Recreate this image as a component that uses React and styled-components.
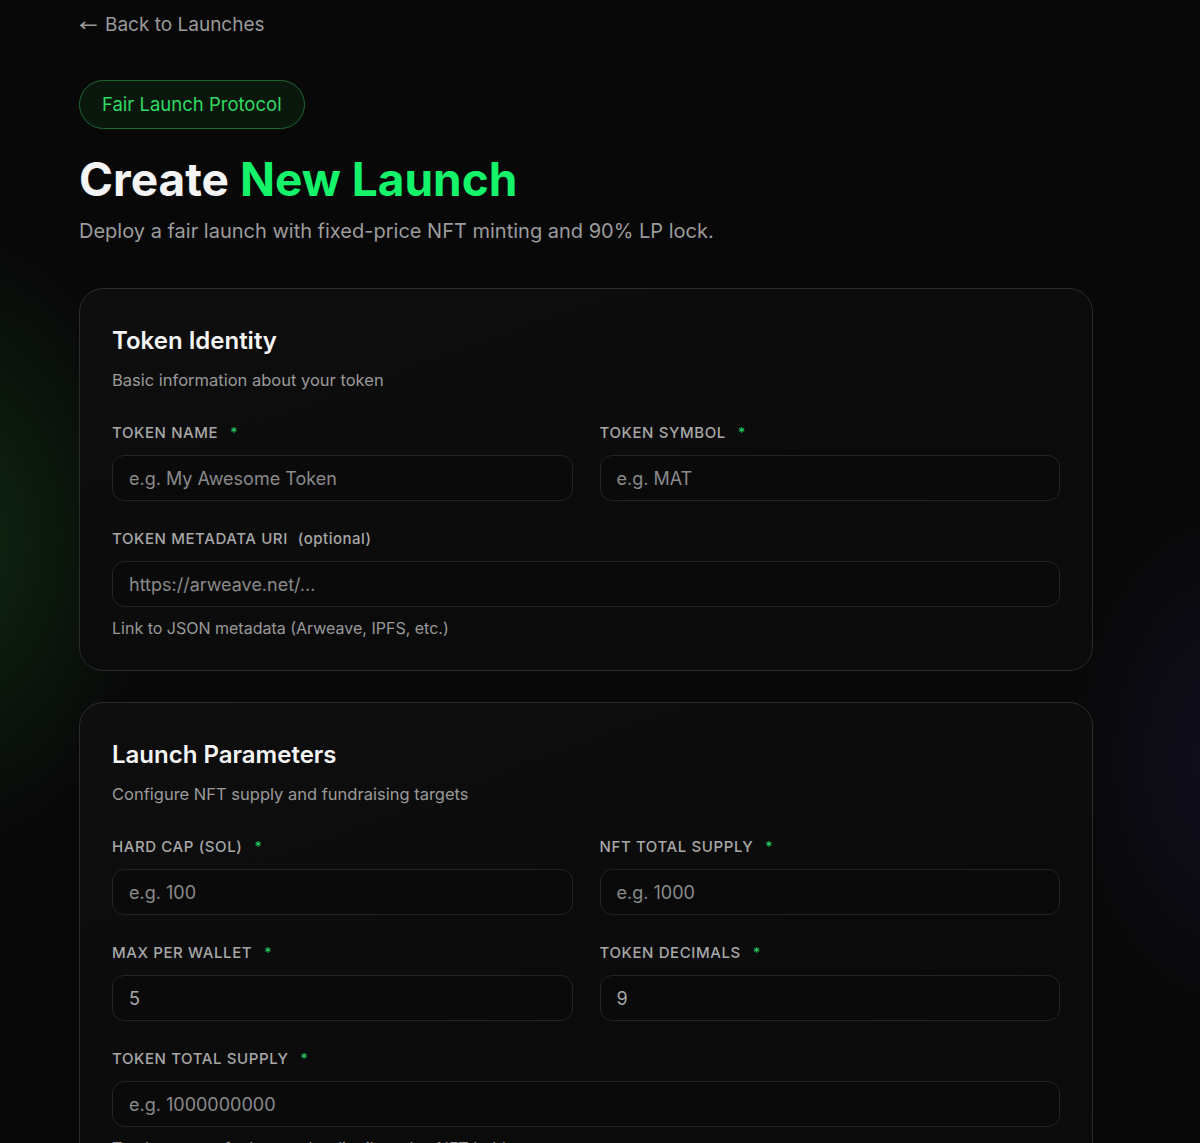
import React from "react";
import styled, { createGlobalStyle } from "styled-components";

const GlobalStyle = createGlobalStyle`
  * { box-sizing: border-box; }
  html, body {
    margin: 0;
    padding: 0;
    background: #080808;
  }
  body {
    font-family: "Inter", "Liberation Sans", sans-serif;
    color: #f2f2f2;
    min-height: 1143px;
    background:
      radial-gradient(ellipse 280px 440px at -40px 540px, rgba(30, 110, 40, 0.3), transparent 70%),
      radial-gradient(ellipse 240px 380px at 1230px 760px, rgba(60, 40, 130, 0.18), transparent 70%),
      #080808;
  }
`;

const fields1 = [
  { label: "Token Name", required: true, placeholder: "e.g. My Awesome Token" },
  { label: "Token Symbol", required: true, placeholder: "e.g. MAT" },
  {
    label: "Token Metadata URI",
    optional: true,
    placeholder: "https://arweave.net/...",
    help: "Link to JSON metadata (Arweave, IPFS, etc.)",
    wide: true,
  },
];

const fields2 = [
  { label: "Hard Cap (SOL)", required: true, placeholder: "e.g. 100" },
  { label: "NFT Total Supply", required: true, placeholder: "e.g. 1000" },
  { label: "Max Per Wallet", required: true, value: "5" },
  { label: "Token Decimals", required: true, value: "9" },
  {
    label: "Token Total Supply",
    required: true,
    placeholder: "e.g. 1000000000",
    help: "Total amount of tokens to be distributed to NFT holders",
    wide: true,
  },
];

function Field({ label, required, optional, placeholder, value, help, wide }) {
  return (
    <FieldBox $wide={wide}>
      <Label>
        {label}
        {required && <Star>*</Star>}
        {optional && <Optional>(optional)</Optional>}
      </Label>
      <Input placeholder={placeholder} defaultValue={value} />
      {help && <Help>{help}</Help>}
    </FieldBox>
  );
}

function Section({ title, desc, fields }) {
  return (
    <Card>
      <CardTitle>{title}</CardTitle>
      <CardDesc>{desc}</CardDesc>
      <Grid>
        {fields.map((f) => (
          <Field key={f.label} {...f} />
        ))}
      </Grid>
    </Card>
  );
}

export default function App() {
  return (
    <>
      <GlobalStyle />
      <Page>
        <BackLink href="#">
          <Arrow>←</Arrow>Back to Launches
        </BackLink>
        <Badge>Fair Launch Protocol</Badge>
        <Title>
          Create <Accent>New Launch</Accent>
        </Title>
        <Subtitle>
          Deploy a fair launch with fixed-price NFT minting and 90% LP lock.
        </Subtitle>
        <Sections>
          <Section
            title="Token Identity"
            desc="Basic information about your token"
            fields={fields1}
          />
          <Section
            title="Launch Parameters"
            desc="Configure NFT supply and fundraising targets"
            fields={fields2}
          />
        </Sections>
      </Page>
    </>
  );
}

const Page = styled.div`
  padding: 13px 79px 0;
  max-width: 1172px;
  height: 1143px;
  overflow: hidden;
`;

const BackLink = styled.a`
  display: inline-flex;
  align-items: center;
  gap: 6px;
  font-size: 19px;
  line-height: 24px;
  color: #9a9a9a;
  text-decoration: none;
`;

const Arrow = styled.span`
  display: inline-block;
  font-family: "DejaVu Sans", sans-serif;
  font-size: 18px;
  transform: scaleX(1.25);
  transform-origin: left center;
  width: 20px;
`;

const Badge = styled.div`
  display: block;
  width: fit-content;
  margin-top: 43px;
  height: 49px;
  padding: 0 22px;
  border-radius: 999px;
  border: 1px solid #1f6a33;
  background: #0a170d;
  color: #2fdc62;
  font-size: 18.5px;
  line-height: 47px;
`;

const Title = styled.h1`
  margin: 22px 0 0;
  font-size: 46px;
  line-height: 56px;
  font-weight: 700;
  color: #f4f4f4;
`;

const Accent = styled.span`
  color: #14f36a;
`;

const Subtitle = styled.p`
  margin: 10px 0 0;
  font-size: 20px;
  line-height: 28px;
  color: #9c9c9c;
`;

const Sections = styled.div`
  margin-top: 43px;
  display: flex;
  flex-direction: column;
  gap: 31px;
  max-width: 1014px;
`;

const Card = styled.section`
  border: 1px solid #2b2b2b;
  border-radius: 24px;
  background: linear-gradient(160deg, #0e0e0e 0%, #0b0b0b 60%, #0c0c0e 100%);
  padding: 36px 32px 32px;
`;

const CardTitle = styled.h2`
  margin: 0;
  font-size: 24px;
  line-height: 32px;
  font-weight: 600;
  color: #f5f5f5;
`;

const CardDesc = styled.p`
  margin: 12px 0 0;
  font-size: 16.5px;
  line-height: 22px;
  color: #9a9a9a;
`;

const Grid = styled.div`
  margin-top: 32px;
  display: grid;
  grid-template-columns: 1fr 1fr;
  column-gap: 27px;
  row-gap: 28px;
`;

const FieldBox = styled.div`
  display: flex;
  flex-direction: column;
  grid-column: ${(p) => (p.$wide ? "1 / -1" : "auto")};
`;

const Label = styled.label`
  display: flex;
  align-items: center;
  font-size: 15px;
  line-height: 20px;
  font-weight: 500;
  letter-spacing: 0.6px;
  text-transform: uppercase;
  color: #a8a8a8;
`;

const Star = styled.span`
  margin-left: 12px;
  color: #22c55e;
  font-size: 14px;
`;

const Optional = styled.span`
  margin-left: 10px;
  text-transform: none;
  letter-spacing: 0.5px;
  color: #a8a8a8;
`;

const Input = styled.input`
  margin-top: 12px;
  height: 46px;
  width: 100%;
  padding: 0 16px;
  border: 1px solid #242424;
  border-radius: 12px;
  background: #0a0a0a;
  color: #a8a8a8;
  font-family: inherit;
  font-size: 18px;
  outline: none;

  &::placeholder {
    color: #8a8a8a;
  }
`;

const Help = styled.p`
  margin: 11px 0 0;
  font-size: 16px;
  line-height: 20px;
  color: #999;
`;
